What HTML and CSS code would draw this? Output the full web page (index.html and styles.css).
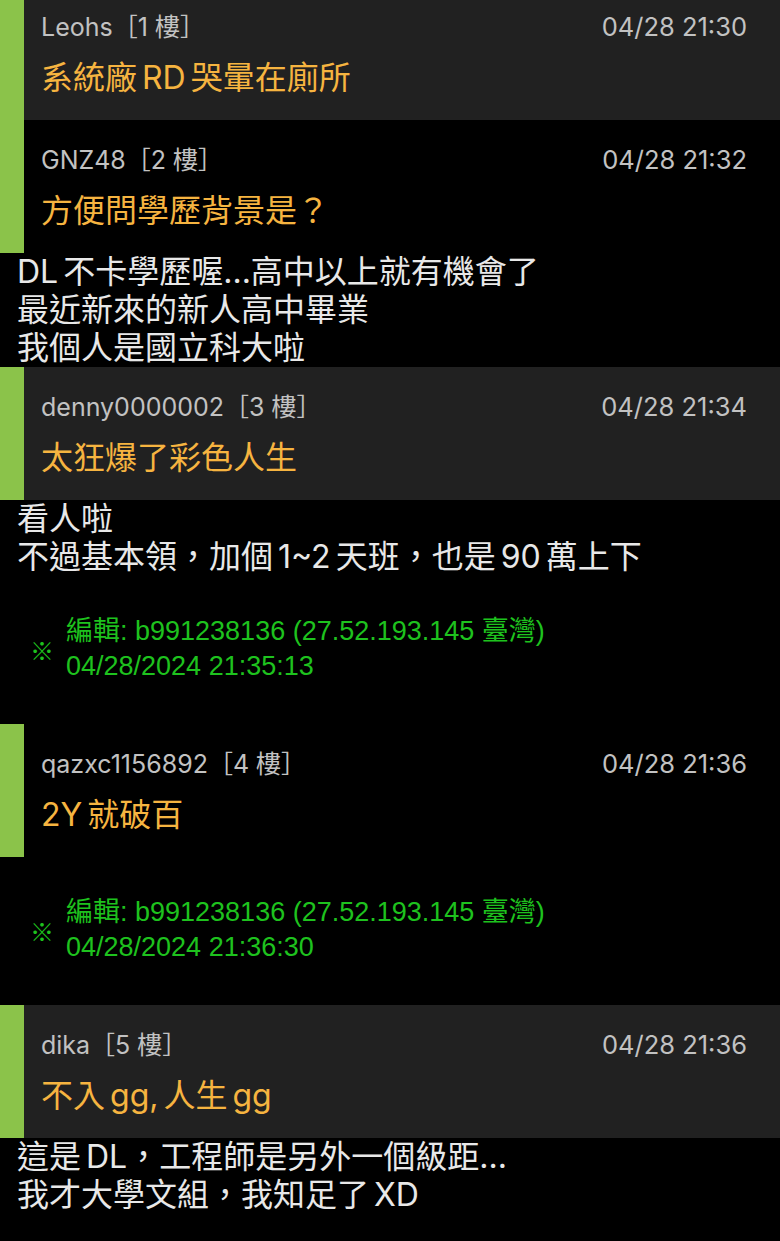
FILE: index.html
```html
<!DOCTYPE html>
<html lang="zh-Hant">
<head>
<meta charset="utf-8">
<title>Thread</title>
<link rel="stylesheet" href="styles.css">
</head>
<body>
<div class="thread">
  <div class="post first">
    <div class="meta"><span class="author">Leohs［1 樓］</span><span class="time">04/28 21:30</span></div>
    <div class="body">系統廠 RD 哭暈在廁所</div>
  </div>
  <div class="post dark">
    <div class="meta"><span class="author">GNZ48［2 樓］</span><span class="time">04/28 21:32</span></div>
    <div class="body">方便問學歷背景是？</div>
  </div>
  <div class="reply">
    <div>DL 不卡學歷喔...高中以上就有機會了</div>
    <div>最近新來的新人高中畢業</div>
    <div>我個人是國立科大啦</div>
  </div>
  <div class="post">
    <div class="meta"><span class="author">denny0000002［3 樓］</span><span class="time">04/28 21:34</span></div>
    <div class="body">太狂爆了彩色人生</div>
  </div>
  <div class="reply">
    <div>看人啦</div>
    <div>不過基本領，加個 1~2 天班，也是 90 萬上下</div>
  </div>
  <div class="edit">
    <span class="mark">※</span>
    <div class="lines">
      <div>編輯: b991238136 (27.52.193.145 臺灣)</div>
      <div>04/28/2024 21:35:13</div>
    </div>
  </div>
  <div class="post dark">
    <div class="meta"><span class="author">qazxc1156892［4 樓］</span><span class="time">04/28 21:36</span></div>
    <div class="body">2Y 就破百</div>
  </div>
  <div class="edit">
    <span class="mark">※</span>
    <div class="lines">
      <div>編輯: b991238136 (27.52.193.145 臺灣)</div>
      <div>04/28/2024 21:36:30</div>
    </div>
  </div>
  <div class="post">
    <div class="meta"><span class="author">dika［5 樓］</span><span class="time">04/28 21:36</span></div>
    <div class="body">不入 gg, 人生 gg</div>
  </div>
  <div class="reply">
    <div>這是 DL，工程師是另外一個級距...</div>
    <div>我才大學文組，我知足了 XD</div>
  </div>
</div>
</body>
</html>
```

FILE: styles.css
```css
html, body {
  margin: 0;
  padding: 0;
  background: #000;
}

body {
  width: 780px;
  height: 1241px;
  overflow: hidden;
  font-family: Inter, "Noto Sans CJK TC", sans-serif;
}

.post {
  background: #212121;
  border-left: 24px solid #8bc34a;
  padding: 25px 33px 22px 17px;
}

.post.dark {
  background: #000;
}

.post.first {
  padding-top: 12px;
}

.meta {
  display: flex;
  justify-content: space-between;
  font-size: 25px;
  line-height: 30px;
  color: #c2c2c2;
}

.meta .time {
  font-size: 25.5px;
}

.body {
  margin-top: 16px;
  font-size: 32px;
  line-height: 40px;
  color: #f6b440;
  word-spacing: -4px;
}

.reply {
  padding-left: 17px;
  font-size: 32px;
  line-height: 38px;
  color: #e8e8e8;
  word-spacing: -4px;
}

.edit {
  display: flex;
  align-items: center;
  padding: 38px 0 40px 30px;
  color: #1ec21e;
  font-family: "Liberation Sans", "Noto Sans CJK TC", sans-serif;
}

.edit .mark {
  width: 36px;
  font-size: 24px;
  line-height: 24px;
  font-weight: bold;
  margin-top: 6px;
}

.edit .lines {
  font-size: 27px;
  line-height: 35px;
}
```
